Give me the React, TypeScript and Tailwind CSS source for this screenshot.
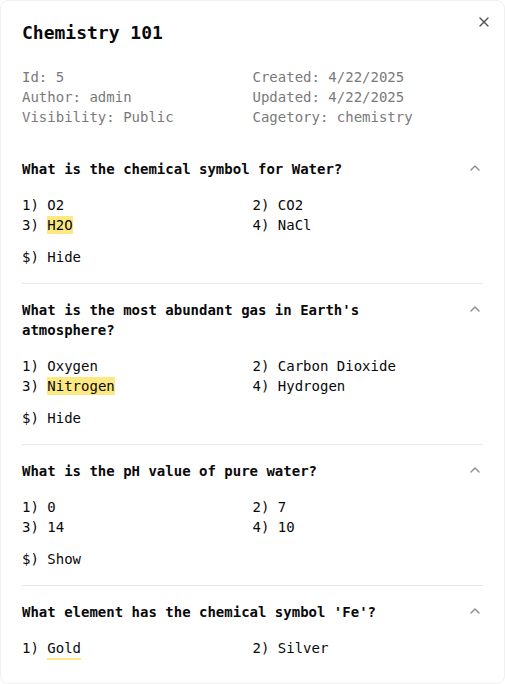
import React from "react";

type Q = {
  q: string;
  answers: string[];
  correct?: number;
  mode?: "bg" | "underline";
  toggle?: string;
};

const questions: Q[] = [
  { q: "What is the chemical symbol for Water?", answers: ["O2", "CO2", "H2O", "NaCl"], correct: 2, mode: "bg", toggle: "Hide" },
  { q: "What is the most abundant gas in Earth's atmosphere?", answers: ["Oxygen", "Carbon Dioxide", "Nitrogen", "Hydrogen"], correct: 2, mode: "bg", toggle: "Hide" },
  { q: "What is the pH value of pure water?", answers: ["0", "7", "14", "10"], toggle: "Show" },
  { q: "What element has the chemical symbol 'Fe'?", answers: ["Gold", "Silver"], correct: 0, mode: "underline" },
];

function ChevronUp() {
  return (
    <svg width="16" height="16" viewBox="0 0 24 24" fill="none" stroke="#8a8a8a" strokeWidth="2" strokeLinecap="round" strokeLinejoin="round">
      <path d="m18 15-6-6-6 6" />
    </svg>
  );
}

export default function App() {
  return (
    <div
      className="relative h-[684px] w-[505px] overflow-hidden rounded-lg border border-[#f0f0f0] bg-white px-[21px] pt-[18px] text-[#09090b]"
      style={{ fontFamily: '"DejaVu Sans Mono", "Liberation Mono", monospace' }}
    >
      <button className="absolute right-[12px] top-[13px] text-[#555]">
        <svg width="16" height="16" viewBox="0 0 24 24" fill="none" stroke="currentColor" strokeWidth="2" strokeLinecap="round" strokeLinejoin="round">
          <path d="M18 6 6 18" />
          <path d="m6 6 12 12" />
        </svg>
      </button>
      <h2 className="text-[18px] font-bold leading-[28px]">Chemistry 101</h2>
      <div className="mt-5 grid grid-cols-2 text-[14px] leading-5 text-[#7a7a7a]">
        <div>Id: 5</div>
        <div>Created: 4/22/2025</div>
        <div>Author: admin</div>
        <div>Updated: 4/22/2025</div>
        <div>Visibility: Public</div>
        <div>Cagetory: chemistry</div>
      </div>
      <div className="mt-8">
        {questions.map((item, i) => (
          <div key={i} className={i < questions.length - 1 ? "border-b border-[#e8e8e8] pb-4" : ""} style={{ paddingTop: i === 0 ? 0 : 16 }}>
            <div className="flex items-start justify-between gap-4">
              <div className="max-w-[420px] text-[14px] font-bold leading-5">{item.q}</div>
              <div className="mt-[1px] shrink-0">
                <ChevronUp />
              </div>
            </div>
            <div className="mt-4 grid grid-cols-2 text-[14px] leading-5">
              {item.answers.map((a, j) => (
                <div key={j}>
                  {j + 1}){" "}
                  {item.correct === j && item.mode === "bg" ? (
                    <span className="bg-[#fde882] py-px">{a}</span>
                  ) : item.correct === j && item.mode === "underline" ? (
                    <span className="border-b-2 border-[#fde882] pb-[2px]">{a}</span>
                  ) : (
                    <span>{a}</span>
                  )}
                </div>
              ))}
            </div>
            {item.toggle && <div className="mt-3 text-[14px] leading-5">$) {item.toggle}</div>}
          </div>
        ))}
      </div>
    </div>
  );
}
